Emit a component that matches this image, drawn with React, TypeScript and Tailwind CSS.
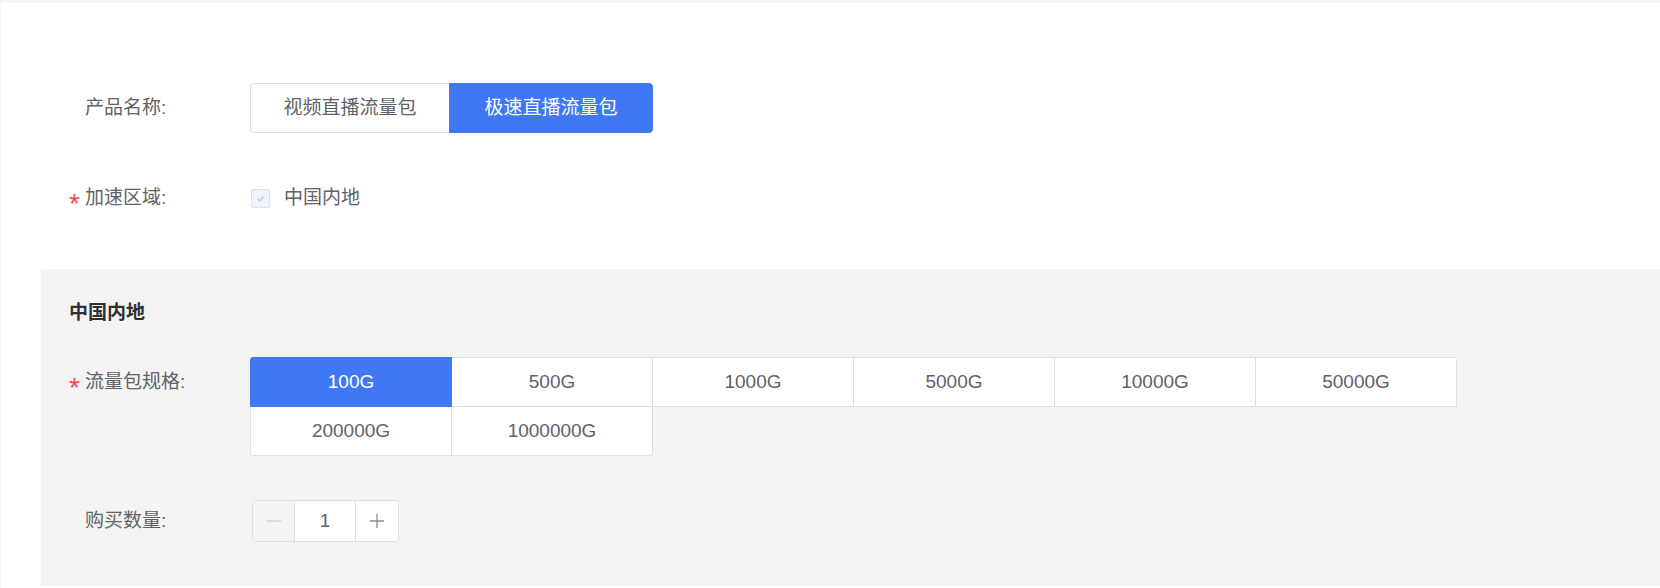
import React from "react";

const specs = ["100G", "500G", "1000G", "5000G", "10000G", "50000G", "200000G", "1000000G"];

const cornerFor = (i: number) => {
  if (i === 0) return "rounded-tl-[3px]";
  if (i === 5) return "rounded-tr-[3px]";
  if (i === 6) return "rounded-bl-[3px]";
  if (i === 7) return "rounded-br-[3px]";
  return "";
};

const Label = ({ text, required }: { text: string; required?: boolean }) => (
  <div className="flex w-[181px] shrink-0 items-center">
    <span className="w-[16px] shrink-0">
      {required && (
        <span className="block h-[14px] translate-y-[-1px] text-[28px] leading-[28px] text-[#f5484d]">*</span>
      )}
    </span>
    <span className="text-[19px] text-[#606266]">{text}</span>
  </div>
);

export default function App() {
  return (
    <div
      className="min-h-[588px] bg-[#f4f5f5] pt-[3px] pl-px"
      style={{ fontFamily: '"Liberation Sans", "Noto Sans CJK SC", sans-serif' }}
    >
      <div className="min-h-[585px] bg-white pt-[80px]">
        {/* product */}
        <div className="flex h-[50px] items-center pl-[68px]">
          <Label text="产品名称:" />
          <div className="flex h-[50px]">
            <button className="flex w-[199px] items-center justify-center rounded-l-[4px] border border-r-0 border-[#dcdfe6] bg-white text-[19px] text-[#606266]">
              视频直播流量包
            </button>
            <button className="flex w-[204px] items-center justify-center rounded-r-[4px] border border-[#3f77f5] bg-[#3f77f5] text-[19px] text-white">
              极速直播流量包
            </button>
          </div>
        </div>

        {/* region */}
        <div className="mt-[40px] flex h-[50px] items-center pl-[68px]">
          <Label text="加速区域:" required />
          <label className="flex items-center">
            <span className="ml-px flex h-[19px] w-[19px] items-center justify-center rounded-[2px] border border-[#dcdfe6] bg-[#edf2fc]">
              <svg width="11" height="11" viewBox="0 0 12 12" fill="none">
                <path d="M2.5 6.2 L5 8.6 L9.6 3.6" stroke="#c0c4cc" strokeWidth="1.3" />
              </svg>
            </span>
            <span className="ml-[14px] text-[19px] text-[#606266]">中国内地</span>
          </label>
        </div>

        {/* panel */}
        <div className="ml-[40px] mt-[46px] bg-[#f4f4f4] pb-[44px] pl-[28px] pt-[30px]">
          <div className="h-[28px] text-[19px] font-bold leading-[28px] text-[#303133]">中国内地</div>

          <div className="mt-[30px] flex items-start">
            <div className="flex h-[50px] items-center">
              <Label text="流量包规格:" required />
            </div>
            <div className="flex w-[1207px] flex-wrap pl-px pt-px">
              {specs.map((s, i) => (
                <div
                  key={s}
                  className={
                    "-ml-px -mt-px flex h-[50px] w-[202px] items-center justify-center border text-[19px] " +
                    cornerFor(i) +
                    (i === 0
                      ? " relative z-10 border-[#3f77f5] bg-[#3f77f5] text-white"
                      : " border-[#dcdfe6] bg-white text-[#606266]")
                  }
                >
                  {s}
                </div>
              ))}
            </div>
          </div>

          <div className="mt-[44px] flex items-center">
            <Label text="购买数量:" />
            <div className="ml-[2px] flex h-[42px] w-[147px] overflow-hidden rounded-[4px] border border-[#dcdfe6] bg-white">
              <div className="flex w-[42px] items-center justify-center border-r border-[#dcdfe6] bg-[#f5f5f5]">
                <svg width="14" height="14" viewBox="0 0 14 14">
                  <path d="M0 7 H14" stroke="#d3d5d9" strokeWidth="1.3" />
                </svg>
              </div>
              <div className="flex w-[61px] items-center justify-center border-r border-[#dcdfe6] text-[19px] text-[#606266]">
                1
              </div>
              <div className="flex flex-1 items-center justify-center">
                <svg width="14" height="14" viewBox="0 0 14 14">
                  <path d="M0 7 H14 M7 0 V14" stroke="#8a8d93" strokeWidth="1.3" />
                </svg>
              </div>
            </div>
          </div>
        </div>
      </div>
    </div>
  );
}
